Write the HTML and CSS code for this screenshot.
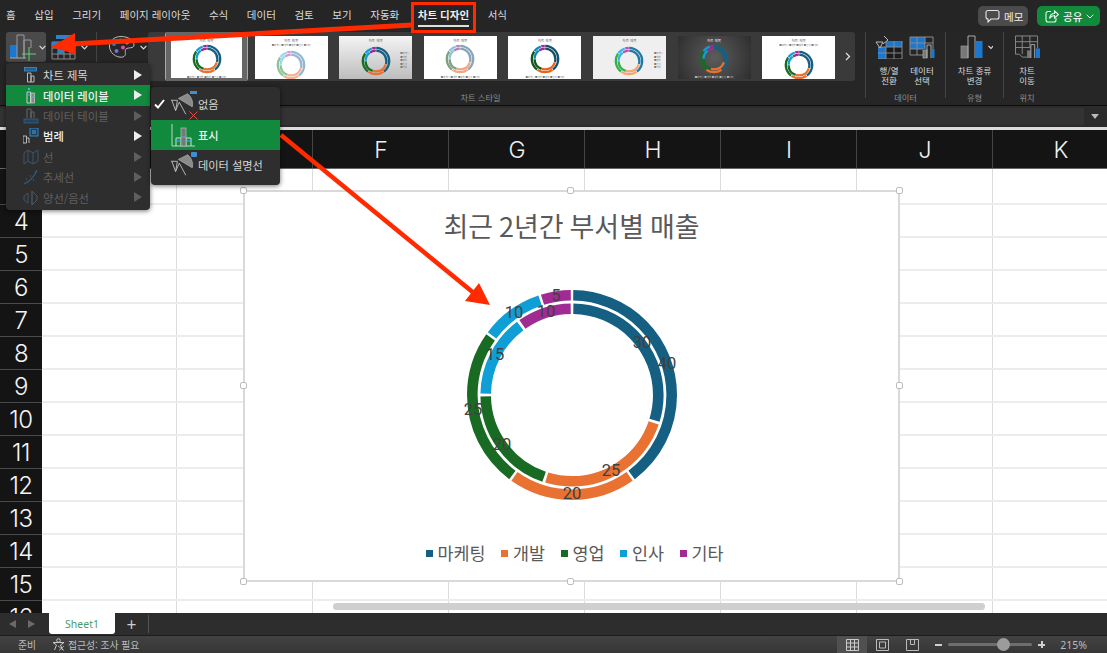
FILE: index.html
```html
<!DOCTYPE html>
<html lang="ko">
<head>
<meta charset="utf-8">
<title>차트 디자인</title>
<link rel="stylesheet" href="styles.css">
</head>
<body>
<svg class="defs" width="0" height="0" aria-hidden="true">
  <symbol id="mini" viewBox="-20 -20 40 40">
    <g transform="rotate(-90)" fill="none">
      <circle class="o s1" r="16.5" pathLength="100" stroke-dasharray="39.4 60.6" stroke-dashoffset="-.3"/>
      <circle class="o s2" r="16.5" pathLength="100" stroke-dasharray="19.4 80.6" stroke-dashoffset="-40.3"/>
      <circle class="o s3" r="16.5" pathLength="100" stroke-dasharray="24.4 75.6" stroke-dashoffset="-60.3"/>
      <circle class="o s4" r="16.5" pathLength="100" stroke-dasharray="9.4 90.6" stroke-dashoffset="-85.3"/>
      <circle class="o s5" r="16.5" pathLength="100" stroke-dasharray="4.4 95.6" stroke-dashoffset="-95.3"/>
      <circle class="i s1" r="13" pathLength="100" stroke-dasharray="29.4 70.6" stroke-dashoffset="-.3"/>
      <circle class="i s2" r="13" pathLength="100" stroke-dasharray="24.4 75.6" stroke-dashoffset="-30.3"/>
      <circle class="i s3" r="13" pathLength="100" stroke-dasharray="19.4 80.6" stroke-dashoffset="-55.3"/>
      <circle class="i s4" r="13" pathLength="100" stroke-dasharray="14.4 85.6" stroke-dashoffset="-75.3"/>
      <circle class="i s5" r="13" pathLength="100" stroke-dasharray="9.4 90.6" stroke-dashoffset="-90.3"/>
    </g>
  </symbol>
  <symbol id="pie" viewBox="0 0 28 26">
    <path d="M9 7 L19 2 C24 6 25 12 24 16 Z" fill="#8a8a8a" stroke="#aaa" stroke-width=".8"/>
    <path d="M1 9 H8 L6 20 L2 9 M6 20 L10 11 L17 24" fill="none" stroke="#bdbdbd" stroke-width="1"/>
  </symbol>
</svg>

<div class="app">
  <header class="tabs">
    <nav class="tablist">
      <span>홈</span><span>삽입</span><span>그리기</span><span>페이지 레이아웃</span><span>수식</span><span>데이터</span><span>검토</span><span>보기</span><span>자동화</span><span class="active">차트 디자인</span><span>서식</span>
    </nav>
    <div class="actions">
      <button class="memo">
        <svg width="15" height="14" viewBox="0 0 15 14"><path d="M3 1.5 H12 A2 2 0 0 1 14 3.5 V8 A2 2 0 0 1 12 10 H6 L3 13 V10 A2 2 0 0 1 1 8 V3.5 A2 2 0 0 1 3 1.5Z" fill="none" stroke="#e6e6e6" stroke-width="1.1"/></svg>
        메모
      </button>
      <button class="share">
        <svg width="14" height="14" viewBox="0 0 14 14"><path d="M6 2.5 H3 A2 2 0 0 0 1 4.5 V11 A2 2 0 0 0 3 13 H9 A2 2 0 0 0 11 11 V9" fill="none" stroke="#e8f5ec" stroke-width="1.1"/><path d="M4.5 9.5 C5 6 7 4.5 9.5 4.5 V2 L13.5 5.5 L9.5 9 V6.5 C7.5 6.5 6 7.5 4.5 9.5Z" fill="none" stroke="#e8f5ec" stroke-width="1.1"/></svg>
        공유
        <svg width="8" height="5" viewBox="0 0 8 5"><path d="M.7 .7 L4 4 L7.3 .7" fill="none" stroke="#e8f5ec" stroke-width="1"/></svg>
      </button>
    </div>
  </header>

  <section class="ribbon">
    <div class="tools">
      <button class="tool tool-add">
        <svg width="28" height="28" viewBox="0 0 28 28">
          <rect x="1" y="12" width="7" height="13" fill="#1b78d0"/>
          <path d="M8 25 V2 H15 V25 M15 25 V7 H22 V15" fill="none" stroke="#999" stroke-width="1"/>
          <path d="M1 25 H17" stroke="#aaa" stroke-width="1"/>
          <path d="M20 14 V28 M13 21 H27" stroke="#5fd07f" stroke-width="1"/>
        </svg>
        <svg class="chev" width="7" height="5" viewBox="0 0 7 5"><path d="M.6 .8 L3.5 3.8 L6.4 .8" fill="none" stroke="#ddd" stroke-width="1.2"/></svg>
      </button>
      <button class="tool tool-layout">
        <svg width="25" height="27" viewBox="0 0 25 27">
          <rect x="5" y="1" width="19" height="4" fill="#2e82c8"/>
          <path d="M1 8 H24 V25 H1 Z M1 14 H24 M1 20 H24 M7 8 V25 M13 8 V25 M19 8 V25" fill="none" stroke="#8a8a8a" stroke-width="1"/>
          <rect x="1" y="8" width="6" height="6" fill="#2e82c8"/>
          <rect x="7" y="14" width="6" height="6" fill="#2e82c8"/>
        </svg>
        <svg class="chev" width="7" height="5" viewBox="0 0 7 5"><path d="M.6 .8 L3.5 3.8 L6.4 .8" fill="none" stroke="#ddd" stroke-width="1.2"/></svg>
      </button>
      <span class="tool-sep"></span>
      <button class="tool tool-palette">
        <svg width="27" height="24" viewBox="0 0 27 24">
          <path d="M13 1.5 C20 1.5 26 5 26 10 C26 14 20 12 18 14 C16 16 19 19 16 21.5 C12 24 2 20 1.5 12 C1 6 6 1.5 13 1.5Z" fill="none" stroke="#bbb" stroke-width="1"/>
          <circle cx="6" cy="9" r="2" fill="#2e82c8"/><circle cx="12.5" cy="5.5" r="2" fill="#2fb66a"/><circle cx="19" cy="7.5" r="2" fill="#ef8a2b"/><circle cx="15" cy="12.5" r="2" fill="#d94fb0"/><circle cx="8.5" cy="16" r="2" fill="#7a6cd9"/>
        </svg>
        <svg class="chev" width="7" height="5" viewBox="0 0 7 5"><path d="M.6 .8 L3.5 3.8 L6.4 .8" fill="none" stroke="#ddd" stroke-width="1.2"/></svg>
      </button>
    </div>

    <div class="style-group">
      <div class="gallery">
        <div class="thumb t1 selected"><b>차트 제목</b><svg class="d"><use href="#mini"/></svg><small>■마케팅 ■개발 ■영업 ■인사 ■기타</small></div>
        <div class="thumb t2 legend-top"><b>차트 제목</b><small>■마케팅 ■개발 ■영업 ■인사 ■기타</small><svg class="d"><use href="#mini"/></svg></div>
        <div class="thumb t3 legend-right"><b>차트 제목</b><div class="split"><svg class="d"><use href="#mini"/></svg><small>■마케팅<br>■개발<br>■영업<br>■인사<br>■기타</small></div></div>
        <div class="thumb t4"><b>차트 제목</b><svg class="d"><use href="#mini"/></svg><small>■마케팅 ■개발 ■영업 ■인사 ■기타</small></div>
        <div class="thumb t5"><b>차트 제목</b><svg class="d"><use href="#mini"/></svg><small>■마케팅 ■개발 ■영업 ■인사 ■기타</small></div>
        <div class="thumb t6 legend-right"><b>차트 제목</b><div class="split"><svg class="d"><use href="#mini"/></svg><small>■마케팅<br>■개발<br>■영업<br>■인사<br>■기타</small></div></div>
        <div class="thumb t7"><b>차트 제목</b><svg class="d"><use href="#mini"/></svg><small>■마케팅 ■개발 ■영업 ■인사 ■기타</small></div>
        <div class="thumb t8 legend-top"><b>차트 제목</b><small>■마케팅 ■개발 ■영업 ■인사 ■기타</small><svg class="d"><use href="#mini"/></svg></div>
        <svg class="gallery-next" width="6" height="9" viewBox="0 0 6 9"><path d="M1 1 L4.5 4.5 L1 8" fill="none" stroke="#ddd" stroke-width="1.3"/></svg>
      </div>
      <div class="group-label style-label">차트 스타일</div>
    </div>

    <div class="rgroup g-data">
      <div class="rbtns">
        <div class="rbtn">
          <svg width="28" height="24" viewBox="0 0 28 24">
            <rect x="3" y="6" width="24" height="18" fill="#1b1b1b"/>
            <rect x="3" y="12" width="8" height="12" fill="#1b78d0"/><rect x="11" y="6" width="16" height="6" fill="#1b78d0"/><rect x="3" y="18" width="8" height="6" fill="#1b78d0"/>
            <path d="M3 12 H27 M3 18 H27 M11 6 V24 M19 6 V24 M27 6 V24 M3 24 H27" fill="none" stroke="#888" stroke-width="1"/>
            <path d="M1 7 H8 L5 13 Z M9 1 L13 5 L8 9" fill="#262626" stroke="#bbb" stroke-width="1"/>
          </svg>
          <span>행/열<br>전환</span>
        </div>
        <div class="rbtn">
          <svg width="26" height="24" viewBox="0 0 26 24">
            <rect x="1" y="2" width="15" height="12" fill="#1b78d0"/>
            <path d="M1 2 H24 V14 M1 2 V20 H14 M1 8 H24 M1 14 H14 M8 2 V20 M16 2 V14" fill="none" stroke="#8a8a8a" stroke-width="1"/>
            <rect x="14" y="15" width="4" height="8" fill="#777" stroke="#aaa" stroke-width=".7"/><path d="M18 23 V10 H22 V23" fill="none" stroke="#aaa"/><rect x="22" y="14" width="3.5" height="9" fill="#1b78d0"/>
          </svg>
          <span>데이터<br>선택</span>
        </div>
      </div>
      <div class="group-label">데이터</div>
    </div>

    <div class="rgroup g-type">
      <div class="rbtns">
        <div class="rbtn rbtn-wide">
          <svg class="type-ic" width="33" height="24" viewBox="0 0 33 24">
            <rect x="1" y="11" width="7" height="12" fill="#777" stroke="#999" stroke-width=".7"/>
            <path d="M8 23 V1 H15 V23" fill="none" stroke="#aaa"/>
            <rect x="15.5" y="6" width="7" height="17" fill="#1b78d0"/>
            <path d="M28.5 11 L31 13.5 L33 11" fill="none" stroke="#ddd" stroke-width="1.1"/>
          </svg>
          <span>차트 종류<br>변경</span>
        </div>
      </div>
      <div class="group-label">유형</div>
    </div>

    <div class="rgroup g-pos">
      <div class="rbtns">
        <div class="rbtn">
          <svg width="27" height="25" viewBox="0 0 27 25">
            <path d="M1 1 H24 V14 M1 1 V20 H5 L8 23 H14 M1 7 H24 M1 13 H16 M8 1 V20 M16 1 V14" fill="none" stroke="#8a8a8a" stroke-width="1"/>
            <rect x="13" y="16" width="4" height="8" fill="#777"/><path d="M17 24 V10 H21 V24" fill="none" stroke="#aaa"/><rect x="22" y="14" width="4.5" height="10" fill="#1b78d0"/>
          </svg>
          <span>차트<br>이동</span>
        </div>
      </div>
      <div class="group-label">위치</div>
    </div>
  </section>

  <section class="formula">
    <div class="formula-input"></div>
    <span class="formula-drop"></span>
  </section>

  <section class="colhead">
    <span class="corner"></span>
    <span class="col col-first"></span><span class="col"></span><span class="col">F</span><span class="col">G</span><span class="col">H</span><span class="col">I</span><span class="col">J</span><span class="col">K</span>
  </section>

  <main class="sheet">
    <div class="row row-first"><span class="rowhead"></span><span class="cells"></span></div>
    <div class="row"><span class="rowhead">4</span><span class="cells"></span></div>
    <div class="row"><span class="rowhead">5</span><span class="cells"></span></div>
    <div class="row"><span class="rowhead">6</span><span class="cells"></span></div>
    <div class="row"><span class="rowhead">7</span><span class="cells"></span></div>
    <div class="row"><span class="rowhead">8</span><span class="cells"></span></div>
    <div class="row"><span class="rowhead">9</span><span class="cells"></span></div>
    <div class="row"><span class="rowhead">10</span><span class="cells"></span></div>
    <div class="row"><span class="rowhead">11</span><span class="cells"></span></div>
    <div class="row"><span class="rowhead">12</span><span class="cells"></span></div>
    <div class="row"><span class="rowhead">13</span><span class="cells"></span></div>
    <div class="row"><span class="rowhead">14</span><span class="cells"></span></div>
    <div class="row"><span class="rowhead">15</span><span class="cells"></span></div>
    <div class="row"><span class="rowhead">16</span><span class="cells"></span></div>

    <div class="scrollbar"></div>

    <article class="chart">
      <i class="handle h-tl"></i><i class="handle h-tc"></i><i class="handle h-tr"></i>
      <i class="handle h-ml"></i><i class="handle h-mr"></i>
      <i class="handle h-bl"></i><i class="handle h-bc"></i><i class="handle h-br"></i>
      <h1 class="chart-title">최근 2년간 부서별 매출</h1>
      <svg class="donut" width="240" height="240" viewBox="-120 -120 240 240">
        <g transform="rotate(-90)" fill="none">
          <circle class="big c1" r="99.7" pathLength="100" stroke-dasharray="39.6 60.4" stroke-dashoffset="-.2"/>
          <circle class="big c2" r="99.7" pathLength="100" stroke-dasharray="19.6 80.4" stroke-dashoffset="-40.2"/>
          <circle class="big c3" r="99.7" pathLength="100" stroke-dasharray="24.6 75.4" stroke-dashoffset="-60.2"/>
          <circle class="big c4" r="99.7" pathLength="100" stroke-dasharray="9.6 90.4" stroke-dashoffset="-85.2"/>
          <circle class="big c5" r="99.7" pathLength="100" stroke-dasharray="4.6 95.4" stroke-dashoffset="-95.2"/>
          <circle class="big c1" r="86.3" pathLength="100" stroke-dasharray="29.5 70.5" stroke-dashoffset="-.25"/>
          <circle class="big c2" r="86.3" pathLength="100" stroke-dasharray="24.5 75.5" stroke-dashoffset="-30.25"/>
          <circle class="big c3" r="86.3" pathLength="100" stroke-dasharray="19.5 80.5" stroke-dashoffset="-55.25"/>
          <circle class="big c4" r="86.3" pathLength="100" stroke-dasharray="14.5 85.5" stroke-dashoffset="-75.25"/>
          <circle class="big c5" r="86.3" pathLength="100" stroke-dasharray="9.5 90.5" stroke-dashoffset="-90.25"/>
        </g>
        <g class="labels">
          <text x="70" y="-51">30</text><text x="95" y="-30">40</text>
          <text x="39" y="77">25</text><text x="0" y="100">20</text>
          <text x="-70" y="51">20</text><text x="-99" y="16">25</text>
          <text x="-77" y="-39">15</text><text x="-58" y="-81">10</text>
          <text x="-26" y="-82">10</text><text x="-16" y="-98">5</text>
        </g>
      </svg>
      <ul class="legend">
        <li><i class="mark m1"></i>마케팅</li>
        <li><i class="mark m2"></i>개발</li>
        <li><i class="mark m3"></i>영업</li>
        <li><i class="mark m4"></i>인사</li>
        <li><i class="mark m5"></i>기타</li>
      </ul>
    </article>
  </main>

  <footer class="sheetbar">
    <span class="nav-tri left"></span><span class="nav-tri right"></span>
    <span class="sheet-tab">Sheet1</span>
    <span class="add-sheet">+</span>
    <span class="sheetbar-sep"></span>
  </footer>
  <footer class="status">
    <span class="ready">준비</span>
    <svg class="a11y" width="13" height="13" viewBox="0 0 13 13"><circle cx="6.5" cy="2.5" r="1.8" fill="none" stroke="#c8c8c8"/><path d="M1 4.5 H12 L8.5 7 L10.5 12 M4.5 7 L2.5 12 M1 4.5 L4.5 7" fill="none" stroke="#c8c8c8"/><path d="M6 8 L12 12.5 M12 8 L7 12.5" stroke="#c8c8c8" stroke-width=".8"/></svg>
    <span class="a11y-text">접근성: 조사 필요</span>
    <div class="status-right">
      <span class="view on"><svg width="13" height="12" viewBox="0 0 13 12"><path d="M.5 .5 H12.5 V11.5 H.5 Z M.5 4 H12.5 M.5 8 H12.5 M4.5 .5 V11.5 M8.5 .5 V11.5" fill="none" stroke="#ccc"/></svg></span>
      <span class="view"><svg width="13" height="12" viewBox="0 0 13 12"><path d="M.5 .5 H12.5 V11.5 H.5 Z M3.5 3 H9.5 V9 H3.5 Z" fill="none" stroke="#bbb"/></svg></span>
      <span class="view"><svg width="13" height="12" viewBox="0 0 13 12"><path d="M.5 .5 H12.5 V11.5 H.5 Z M4.5 .5 V5.5 H8.5 V.5" fill="none" stroke="#bbb"/></svg></span>
      <span class="zoom-btn minus"></span>
      <span class="slider"><i class="knob"></i></span>
      <span class="zoom-btn plus"></span>
      <span class="pct">215%</span>
    </div>
  </footer>
</div>

<div class="menu main-menu">
  <div class="mi"><svg class="mi-ic" width="16" height="16" viewBox="0 0 16 16"><rect x="1.5" y=".5" width="12" height="3.5" fill="#1f5f92" stroke="#3d8fd0" stroke-width=".8"/><path d="M4.5 15 V6 H8 V15 Z M8 15 V9 H11 V15 Z" fill="none" stroke="#bbb"/></svg><span>차트 제목</span><i class="tri"></i></div>
  <div class="mi hi"><svg class="mi-ic" width="16" height="16" viewBox="0 0 16 16"><path d="M4 15 V4 H7.5 V15 Z" fill="none" stroke="#ccc"/><rect x="8" y="5" width="3.5" height="10" fill="#888" stroke="#ccc" stroke-width=".7"/><path d="M4 7 H7.5 M8 9 H11.5" stroke="#4ab0ea"/><rect x="5" y="0" width="2" height="2" fill="#4ab0ea"/></svg><span class="bold">데이터 레이블</span><i class="tri"></i></div>
  <div class="mi off"><svg class="mi-ic" width="16" height="16" viewBox="0 0 16 16"><path d="M4 10 V1 H8 V10 M8 10 V4 H11 V10" fill="none" stroke="#666"/><rect x="1" y="11" width="14" height="4" fill="#26435c" stroke="#35628a" stroke-width=".8"/></svg><span>데이터 테이블</span><i class="tri"></i></div>
  <div class="mi"><svg class="mi-ic" width="16" height="16" viewBox="0 0 16 16"><path d="M0 15 V8 H3.5 V15 Z M3.5 15 V10 H6 V15" fill="none" stroke="#bbb"/><rect x="7" y="0" width="8" height="8" fill="#16415f" stroke="#3d8fd0" stroke-width=".9"/><path d="M9 3 H13 M9 5 H13" stroke="#8cc4ea" stroke-width=".7"/></svg><span class="bold">범례</span><i class="tri"></i></div>
  <div class="mi off"><svg class="mi-ic" width="16" height="16" viewBox="0 0 16 16"><path d="M1 4 L5 1 L10 4 L15 1 V12 L10 15 L5 12 L1 15 Z M5 1 V12 M10 4 V15" fill="none" stroke="#3c566c"/></svg><span>선</span><i class="tri"></i></div>
  <div class="mi off"><svg class="mi-ic" width="16" height="16" viewBox="0 0 16 16"><path d="M1 15 C6 13 11 8 14 1" fill="none" stroke="#2e5f88" stroke-width="1.1"/><path d="M3 10 h1 M7 7 h1 M10 11 h1 M12 3 h1" stroke="#666"/></svg><span>추세선</span><i class="tri"></i></div>
  <div class="mi off"><svg class="mi-ic" width="16" height="16" viewBox="0 0 16 16"><path d="M1 6 L5 3 V13 L1 10 Z" fill="none" stroke="#3c566c"/><path d="M9 1 L14 6 V10 L9 15 Z" fill="none" stroke="#555"/><path d="M9 1 V15" stroke="#3c566c"/></svg><span>양선/음선</span><i class="tri"></i></div>
</div>

<div class="menu sub-menu">
  <div class="si si-none">
    <svg class="check" width="11" height="10" viewBox="0 0 11 10"><path d="M1 5.5 L4 8.5 L10 1" fill="none" stroke="#fff" stroke-width="2"/></svg>
    <span class="si-ic"><svg width="26" height="26"><use href="#pie"/></svg><i class="dash"></i>
      <svg class="x" width="9" height="9" viewBox="0 0 9 9"><path d="M.5 .5 L8.5 8.5 M8.5 .5 L.5 8.5" stroke="#d9534a" stroke-width="1"/></svg></span>
    <span>없음</span>
  </div>
  <div class="si hi">
    <span class="si-ic"><svg width="26" height="26" viewBox="0 0 26 26"><path d="M2 2 V24 H25" fill="none" stroke="#b9d6c3"/><path d="M6 24 V16 H11 V24 M16 24 V16 H21 V24" fill="none" stroke="#cfe0d4"/><rect x="11" y="6" width="5" height="18" fill="#777" stroke="#bbb" stroke-width=".7"/><path d="M6 19 H11 M11 15 H16 M16 19 H21" stroke="#49b4f0" stroke-width="1.2"/></svg></span>
    <span class="bold">표시</span>
  </div>
  <div class="si si-last">
    <span class="si-ic"><svg width="26" height="26"><use href="#pie"/></svg><i class="bubble"></i></span>
    <span>데이터 설명선</span>
  </div>
</div>

<svg class="annot" width="1107" height="653" viewBox="0 0 1107 653" aria-hidden="true">
  <rect x="412.5" y="3.5" width="62" height="28" fill="none" stroke="#ff2a00" stroke-width="3"/>
  <path d="M412 25 L72 44" stroke="#ff2a00" stroke-width="5" fill="none"/>
  <path d="M51 47 L75 33 L75 54 Z" fill="#ff2a00"/>
  <path d="M281 135 L475 294" stroke="#ff2a00" stroke-width="4.5" fill="none"/>
  <path d="M490 305 L465 301 L479 283 Z" fill="#ff2a00"/>
</svg>
</body>
</html>
```

FILE: styles.css
```css
* { box-sizing: border-box; }
html, body { margin: 0; height: 100%; }
body {
  position: relative;
  width: 1107px;
  height: 653px;
  overflow: hidden;
  background: #262626;
  color: #ddd;
  font-family: "Noto Sans CJK KR", "Noto Sans", sans-serif;
}
.defs { position: absolute; }
.app { display: flex; flex-direction: column; height: 653px; }
button { font: inherit; border: 0; padding: 0; color: inherit; }

/* Tab strip */
.tabs {
  height: 32px;
  flex: none;
  display: flex;
  justify-content: space-between;
  background: #252525;
  padding: 0 7px 0 6px;
}
.tablist { display: flex; gap: 18.6px; font-size: 10.5px; line-height: 29px; color: #dcdcdc; }
.tablist .active { font-weight: 700; color: #f0f0f0; position: relative; }
.tablist .active::after {
  content: "";
  position: absolute;
  left: 0; right: 0; bottom: 5px;
  height: 2px;
  background: #e0e0e0;
}
.actions { display: flex; gap: 9px; padding-top: 6px; }
.memo, .share {
  height: 20px;
  border-radius: 5px;
  display: flex;
  align-items: center;
  font-size: 10.5px;
  gap: 4px;
}
.memo { width: 50px; background: #4b4b4b; padding-left: 7px; color: #eee; }
.share { width: 63px; background: #128a3c; padding-left: 8px; color: #f3f3f3; font-weight: 500; }

/* Ribbon */
.ribbon {
  height: 74px;
  flex: none;
  display: flex;
  background: #262626;
  border-bottom: 1px solid #0c0c0c;
  padding-left: 6px;
}
.tools { width: 142px; display: flex; align-items: flex-start; flex: none; }
.tool {
  height: 30px;
  background: none;
  display: flex;
  align-items: center;
  position: relative;
}
.tool-add { width: 40px; background: #4a4a4a; border-radius: 3px; padding-left: 3px; gap: 2px; margin-right: 5px; }
.tool-layout { width: 38px; gap: 5px; padding-top: 1px; }
.tool-sep { width: 1px; height: 30px; background: #444; margin: 0 11px 0 8px; }
.tool-palette { width: 42px; gap: 5px; }
.style-group { width: 707px; flex: none; }
.gallery {
  height: 49px;
  background: #3a3a3a;
  border-radius: 3px;
  display: flex;
  gap: 11.6px;
  align-items: flex-end;
  padding: 0 0 2px 22px;
  position: relative;
}
.gallery-next { position: absolute; right: 4px; top: 20px; }
.thumb {
  width: 73px;
  height: 43px;
  flex: none;
  background: #fff;
  color: #666;
  display: flex;
  flex-direction: column;
  align-items: center;
  overflow: hidden;
  padding-top: 2px;
}
.thumb.selected { outline: 5px solid #666; outline-offset: -1px; box-shadow: 0 0 0 6px #aaa; clip-path: inset(-4px -5px -2px -5px round 3px); }
.thumb b { font-size: 3.6px; line-height: 5px; font-weight: 400; flex: none; }
.thumb small { font-size: 2.4px; line-height: 4px; color: #777; flex: none; white-space: nowrap; }
.thumb .d { width: 32px; height: 32px; flex: none; }
.thumb .split { display: flex; width: 100%; justify-content: center; align-items: center; position: relative; flex: 1; }
.thumb .split small { position: absolute; right: 3px; line-height: 3.6px; }
.o, .i { stroke-width: 2.9; }
.s1 { stroke: var(--c1); } .s2 { stroke: var(--c2); } .s3 { stroke: var(--c3); } .s4 { stroke: var(--c4); } .s5 { stroke: var(--c5); }
.thumb {
  --c1: #156082; --c2: #e97132; --c3: #196b24; --c4: #0f9ed5; --c5: #a02b93;
}
.t2 { --c1: #93b8d0; --c2: #f4b393; --c3: #8fc49a; --c4: #9ad6ee; --c5: #d79ace; }
.t3 { background: linear-gradient(#f4f4f4, #bdbdbd); }
.t3 .o, .t3 .i { stroke-width: 5; }
.t4 { --c1: #8aa5b9; --c2: #efa883; --c3: #7f9f82; --c4: #8cc3dc; --c5: #bd7fb6; }
.t5 { --c1: #12506c; --c2: #e8641b; --c3: #13561c; --c4: #0b87b8; --c5: #a02b93; }
.t6 { background: #efefef; --c1: #1f7aa6; --c2: #f4a574; --c3: #34b04c; --c4: #31b5ea; --c5: #c050b8; }
.t7 { background: radial-gradient(circle, #5c5c5c, #2e2e2e); color: #eee; }
.t7 small { color: #bbb; }
.t8 .o, .t8 .i { stroke-width: 5; }
.t8 small, .t2 small { margin-bottom: 2px; }
.group-label {
  font-size: 8.2px;
  line-height: 12px;
  color: #8f8f8f;
  text-align: center;
  margin-top: 10px;
}
.style-label { padding-right: 42px; }
.rgroup {
  flex: none;
  height: 66px;
  border-left: 1px solid #444;
  display: flex;
  flex-direction: column;
  align-items: center;
}
.g-data { margin-left: 10px; width: 80px; }
.g-type { width: 58px; }
.g-pos { width: 47px; }
.rbtns { display: flex; height: 53px; flex: none; gap: 5px; padding-top: 3px; }
.rbtn { display: flex; flex-direction: column; align-items: center; width: 28px; font-size: 8.5px; line-height: 10.4px; text-align: center; color: #dcdcdc; }
.rbtn svg { height: 24px; flex: none; }
.rbtn span { margin-top: 6px; white-space: nowrap; }
.rbtn-wide { width: 44px; }
.type-ic { margin-left: 3px; }
.rgroup .group-label { margin-top: 6px; flex: none; }

/* Formula bar */
.formula {
  height: 21px;
  flex: none;
  background: #2b2b2b;
  display: flex;
  align-items: center;
  padding-right: 5px;
}
.formula-input { flex: 1; height: 17px; background: #333; }
.formula-drop {
  width: 14px;
  height: 5px;
  margin-left: 4px;
  clip-path: polygon(22% 0, 78% 0, 50% 100%);
  background: #bbb;
}

/* Column headers */
.colhead {
  height: 42px;
  flex: none;
  display: flex;
  background: #141414;
  border-top: 3px solid #dcdcdc;
  border-bottom: 1px solid #666;
  color: #f0f0f0;
  font-family: Inter, "Noto Sans", sans-serif;
  font-weight: 300;
  font-size: 23px;
  line-height: 40px;
  overflow: hidden;
}
.corner { width: 42px; flex: none; }
.col { width: 136px; flex: none; text-align: center; padding-left: 1px; border-left: 1px solid #444; }
.col-first { width: 134px; }

/* Sheet */
.sheet {
  flex: 1;
  min-height: 0;
  position: relative;
  overflow: hidden;
  background: #fff;
}
.row { height: 33px; display: flex; }
.row-first { height: 36px; }
.rowhead {
  width: 42px;
  flex: none;
  background: #141414;
  color: #f4f4f4;
  font-family: Inter, "Noto Sans", sans-serif;
  font-weight: 300;
  font-size: 24px;
  letter-spacing: -.5px;
  display: flex;
  align-items: center;
  justify-content: center;
  border-bottom: 1px solid #4a4a4a;
}
.cells {
  flex: 1;
  border-bottom: 2px solid #ececec;
  background-image: linear-gradient(to right, #dcdcdc 1px, transparent 1px);
  background-size: 136px 100%;
  background-position: 134px 0;
}
.scrollbar {
  position: absolute;
  left: 333px;
  bottom: 3px;
  width: 652px;
  height: 7px;
  border-radius: 4px;
  background: #cfcfcf;
}

/* Chart */
.chart {
  position: absolute;
  left: 243px;
  top: 21px;
  width: 657px;
  height: 392px;
  background: #fff;
  border: 2px solid #d9d9d9;
  display: flex;
  flex-direction: column;
  align-items: center;
}
.handle {
  position: absolute;
  width: 7px;
  height: 7px;
  background: #fff;
  border: 1px solid #bdbdbd;
  border-radius: 2px;
}
.h-tl { left: -5px; top: -5px; }
.h-tc { left: 322px; top: -5px; }
.h-tr { right: -5px; top: -5px; }
.h-ml { left: -5px; top: 190px; }
.h-mr { right: -5px; top: 190px; }
.h-bl { left: -5px; bottom: -5px; }
.h-bc { left: 322px; bottom: -5px; }
.h-br { right: -5px; bottom: -5px; }
.chart-title {
  margin: 14px 0 0;
  font-size: 27px;
  line-height: 40px;
  font-weight: 400;
  word-spacing: -1.7px;
  color: #595959;
  white-space: nowrap;
}
.donut { margin-top: 29px; flex: none; }
.big { stroke-width: 10.6; }
.c1 { stroke: #156082; } .c2 { stroke: #e97132; } .c3 { stroke: #196b24; } .c4 { stroke: #0f9ed5; } .c5 { stroke: #a02b93; }
.labels text {
  font-family: Roboto, "Noto Sans", sans-serif;
  font-size: 16.5px;
  fill: #404040;
  text-anchor: middle;
  dominant-baseline: middle;
}
.legend {
  list-style: none;
  margin: 26px 0 0;
  padding: 0 0 0 6px;
  display: flex;
  gap: 15.5px;
  font-size: 17.4px;
  line-height: 24px;
  color: #595959;
}
.legend li { display: flex; align-items: center; gap: 5px; }
.mark { width: 7px; height: 7px; }
.m1 { background: #156082; } .m2 { background: #e97132; } .m3 { background: #196b24; } .m4 { background: #0f9ed5; } .m5 { background: #a02b93; }

/* Bottom bars */
.sheetbar {
  height: 22px;
  flex: none;
  background: #2d2d2d;
  display: flex;
  align-items: center;
  padding-left: 9px;
}
.nav-tri { width: 0; height: 0; border-top: 4px solid transparent; border-bottom: 4px solid transparent; }
.nav-tri.left { border-right: 7px solid #6a6a6a; margin-right: 12px; }
.nav-tri.right { border-left: 7px solid #6a6a6a; margin-right: 14px; }
.sheet-tab {
  width: 66px;
  height: 21px;
  align-self: flex-start;
  background: #fff;
  border-radius: 0 0 3px 3px;
  color: #4a9a6b;
  font-size: 10.5px;
  font-family: "Noto Sans", sans-serif;
  display: flex;
  align-items: center;
  justify-content: center;
}
.add-sheet { width: 33px; text-align: center; font-size: 17px; line-height: 20px; color: #ccc; }
.sheetbar-sep { width: 1px; height: 18px; background: #555; }
.status {
  height: 18px;
  flex: none;
  border-top: 1px solid #1c1c1c;
  background: linear-gradient(#434343, #363636);
  display: flex;
  align-items: center;
  font-size: 9.8px;
  color: #bdbdbd;
  padding-left: 18px;
}
.ready { width: 34px; }
.a11y { flex: none; }
.a11y-text { margin-left: 3px; }
.status-right { margin-left: auto; display: flex; align-items: center; height: 100%; padding-right: 20px; }
.view { width: 30px; height: 100%; display: flex; align-items: center; justify-content: center; }
.view.on { background: #505050; }
.zoom-btn { width: 7px; height: 2px; background: #cfcfcf; position: relative; margin: 0 6px 0 8px; }
.zoom-btn.plus { margin: 0 15px 0 6px; }
.zoom-btn.plus::after { content: ""; position: absolute; left: 2.5px; top: -2.5px; width: 2px; height: 7px; background: #cfcfcf; }
.slider { width: 84px; height: 3px; border-radius: 2px; background: #6e6e6e; position: relative; }
.knob { position: absolute; left: 49px; top: -5px; width: 13px; height: 13px; border-radius: 50%; background: #9c9c9c; }
.pct { font-size: 10.5px; font-family: "Noto Sans", sans-serif; color: #bbb; }

/* Context menus */
.menu {
  position: absolute;
  background: #2e2e2e;
  border-radius: 4px;
  box-shadow: 0 1px 5px rgba(0, 0, 0, .55);
  font-size: 11.3px;
  color: #d6d6d6;
}
.main-menu { left: 6px; top: 63px; width: 144px; padding: 2px 0; display: flex; flex-direction: column; }
.mi { height: 20.4px; display: flex; align-items: center; padding-left: 17px; position: relative; }
.mi span { margin-left: 4px; }
.mi-ic { flex: none; }
.mi .tri {
  position: absolute;
  right: 8px;
  top: 5px;
  border-left: 8px solid #eee;
  border-top: 5px solid transparent;
  border-bottom: 5px solid transparent;
}
.mi.off { color: #606060; }
.mi.off .tri { border-left-color: #5e5e5e; }
.hi { background: #128a3e; color: #eef6f0; }
.bold { font-weight: 500; color: #f0f0f0; }
.sub-menu { left: 151px; top: 87px; width: 129px; display: flex; flex-direction: column; }
.si { height: 30px; display: flex; align-items: center; padding-left: 19px; gap: 1px; position: relative; font-size: 11.2px; }
.si-none { height: 33px; }
.si-last { height: 35px; padding-bottom: 5px; }
.si-ic { position: relative; display: block; width: 27px; height: 26px; flex: none; }
.si-ic svg { display: block; }
.check { position: absolute; left: 3px; top: 12px; }
.dash { position: absolute; right: 0; top: 0; width: 7px; height: 3px; background: #3d8fd0; }
.bubble { position: absolute; right: 0; top: 0; width: 6px; height: 5px; background: #3d8fd0; border-radius: 1px; }
.x { position: absolute; right: -1px; bottom: -3px; }
.annot { position: absolute; left: 0; top: 0; pointer-events: none; }
```
